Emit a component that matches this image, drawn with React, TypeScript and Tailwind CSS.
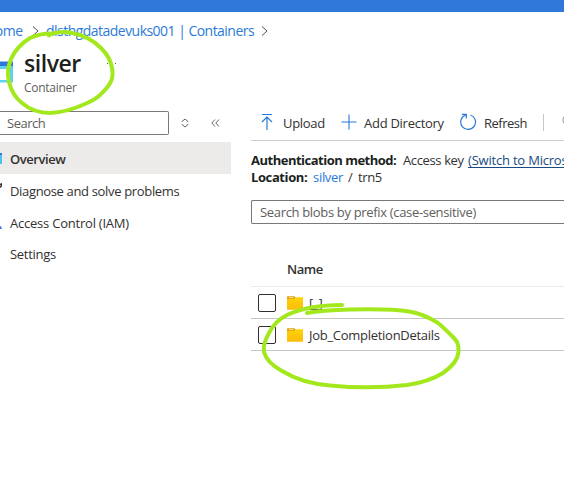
import React from "react";

function Chevron() {
  return (
    <svg width="8" height="12" viewBox="0 0 8 12" fill="none" stroke="#555" strokeWidth="1" className="shrink-0">
      <path d="M1 1.5 6 6 1 10.5" />
    </svg>
  );
}

function Folder() {
  return (
    <svg width="16" height="14" viewBox="0 0 16 14" className="shrink-0">
      <defs>
        <linearGradient id="folder" x1="0" y1="0" x2="0" y2="1">
          <stop offset="0" stopColor="#fdd309" />
          <stop offset="1" stopColor="#fbbc09" />
        </linearGradient>
      </defs>
      <path d="M0 1.2H15.6Q16 1.2 16 1.6V13.4Q16 13.8 15.5 13.8H.5Q0 13.8 0 13.4Z" fill="url(#folder)" />
      <path d="M0 .8Q0 .3.5.3H7.2Q8 .3 8.2 1.2L7 3H0Z" fill="#dfa50e" />
      <path d="M2 1.6H6" stroke="#fbe6ad" strokeWidth=".9" />
    </svg>
  );
}

function Row({ name, tracking }: { name: string; tracking: string }) {
  return (
    <div className="flex h-8 items-center border-b border-[#c8c6c4] pl-[7px]">
      <span className="size-[18px] shrink-0 rounded-[2px] border border-[#323130]" />
      <span className="ml-[11px] flex"><Folder /></span>
      <span className={`ml-1.5 pt-0.5 text-[#323130] ${tracking}`}>{name}</span>
    </div>
  );
}

function Sidebar() {
  return (
    <aside className="w-[231px] shrink-0">
      <div className="flex h-6 items-center">
        <div className="flex h-6 w-[169px] items-center rounded-r-[2px] border border-l-0 border-[#7b7977] pl-[7px] text-[#605e5c]">
          <span className="tracking-[-0.5px]">Search</span>
        </div>
        <svg width="8" height="10" viewBox="0 0 8 10" fill="none" stroke="#666" className="ml-3">
          <path d="M1 4V3.5L4 1 7 3.5V4M1 6V6.5L4 9 7 6.5V6" />
        </svg>
        <svg width="9" height="8" viewBox="0 0 9 8" fill="none" stroke="#555" strokeWidth=".9" className="ml-[22px]">
          <path d="M4 .5.8 4 4 7.5M8 .5 4.8 4 8 7.5" />
        </svg>
      </div>
      <nav className="mt-[7px] text-[#323130]">
        <div className="flex h-8 items-center bg-[#edebe9]">
          <svg width="10" height="16" viewBox="0 0 10 16">
            <path d="M0 3H2V5H0Z" fill="#2f78db" />
            <path d="M0 5H2V14H0Z" fill="#4bc5eb" />
          </svg>
          <span className="pt-0.5 font-semibold tracking-[-0.45px]">Overview</span>
        </div>
        <div className="flex h-8 items-center">
          <svg width="10" height="16" viewBox="0 0 10 16" fill="none" stroke="#323130" strokeWidth="1.4">
            <path d="M0 2.5 1.3 2V4L0 5.5" />
          </svg>
          <span className="pt-0.5 tracking-[-0.34px]">Diagnose and solve problems</span>
        </div>
        <div className="flex h-8 items-center">
          <svg width="10" height="16" viewBox="0 0 10 16">
            <path d="M0 11.5Q1.5 12.5 2 15H0Z" fill="#4673df" />
          </svg>
          <span className="pt-0.5 tracking-[-0.22px]">Access Control (IAM)</span>
        </div>
        <div className="flex h-[30px] items-center pl-2.5">
          <span className="pt-0.5 tracking-[-0.3px]">Settings</span>
        </div>
      </nav>
    </aside>
  );
}

function Toolbar() {
  return (
    <div className="flex h-[30px] border-b border-[#d0cecd] text-[#323130]">
      <div className="flex h-6 w-full items-center whitespace-nowrap">
        <svg width="12" height="18" viewBox="0 0 12 18" fill="none" stroke="#2879d8" strokeWidth="1.2" className="mb-0.5 ml-2.5 shrink-0">
          <path d="M1 1.5H11M6 17V4M1 9 6 4 11 9" />
        </svg>
        <span className="ml-2.5 w-[58px] shrink-0 tracking-[-0.3px]">Upload</span>
        <svg width="16" height="16" viewBox="0 0 16 16" stroke="#2879d8" strokeWidth="1.1" className="mb-0.5 shrink-0">
          <path d="M8 .5V15.5M.5 8H15.5" />
        </svg>
        <span className="ml-[7px] w-24 shrink-0 tracking-[-0.27px]">Add Directory</span>
        <svg width="17" height="18" viewBox="0 0 17 18" fill="none" stroke="#2879d8" strokeWidth="1.2" className="mb-0.5 shrink-0">
          <path d="M10.5 2A7.4 7.4 0 1 1 5 2.3L6.2 1.3M2 1.4H6.3V5.4" />
        </svg>
        <span className="ml-[7px] w-[59px] shrink-0 tracking-[-0.5px]">Refresh</span>
        <span className="mb-0.5 h-[17px] w-px shrink-0 bg-[#c8c6c4]" />
        <svg width="12" height="14" viewBox="0 0 12 14" fill="none" stroke="#a19f9d" strokeWidth="1.1" className="mb-1 ml-[18px] shrink-0">
          <circle cx="6" cy="6" r="5" />
        </svg>
      </div>
    </div>
  );
}

function Scribbles() {
  return (
    <svg className="pointer-events-none absolute inset-0" width="564" height="495" viewBox="0 0 564 495" fill="none" stroke="#a3e81c" strokeWidth="4" strokeLinecap="round" strokeLinejoin="round">
      <path d="M49 35.5C53 32.5 63 31 72 33C84 35 94 41 101 48C106 53 111 61 112 68C114 78 111 84 103 92C98 98 92 101 85 104C74 109 62 112.5 50 113C39 113 29 109 22 103C14 97 11 90 9 82C7 74 8 66 11 59C15 50 22 43 30 38C36 35 42 33.5 52 33.5" />
      <path d="M342 305C322 305 302 308 287 315C277 320 272 327 269 333C265 340 263 346 264 352C266 360 273 366 282 371C295 379 312 384 330 385.5C355 388 386 387.5 407 385C421 383 435 378 443 373C453 366 458 359 458.5 352C459 344 457 341 453 337C448 332 443 327 438 323C430 318 419 313 409 311.5C394 309 370 309 350 309.5C333 310 318 311 307 313" />
    </svg>
  );
}

export default function App() {
  return (
    <div className="relative h-[495px] w-[564px] overflow-hidden bg-white font-['Open_Sans','Noto_Sans',sans-serif] text-[13px] leading-[17px] text-[#323130]">
      <div className="h-3 bg-[#3079da]" />
      <div className="flex h-9 items-center whitespace-nowrap pt-0.5 text-[14px] leading-5 text-[#2c7cd6]">
        <span className="-ml-[15px] w-[47px] shrink-0 tracking-[-0.5px]">Home</span>
        <Chevron />
        <span className="ml-1.5 w-[215px] shrink-0 tracking-[-0.53px]">dlsthgdatadevuks001 | Containers</span>
        <Chevron />
      </div>
      <header className="flex h-[63px]">
        <svg width="24" height="50" viewBox="0 0 24 50" className="shrink-0">
          <path d="M0 13.5H13V18H0Z" fill="#2f78db" />
          <path d="M0 18H13V34.5H0Z" fill="#5cd2f0" />
          <path d="M0 21H7V32H0Z" fill="#fff" />
        </svg>
        <div className="w-[83px]">
          <h1 className="text-[23px] font-semibold leading-[31px] tracking-[-0.45px] text-[#201f1e]">silver</h1>
          <div className="mt-px text-[12px] leading-4 tracking-[-0.28px] text-[#605e5c]">Container</div>
        </div>
        <div className="mt-[15px] flex gap-[3px]">
          <i className="size-px bg-[#555]" />
          <i className="size-px bg-[#555]" />
          <i className="size-px bg-[#555]" />
        </div>
      </header>
      <div className="flex">
        <Sidebar />
        <main className="ml-5 w-[313px] shrink-0">
          <Toolbar />
          <div className="mt-[11px] whitespace-nowrap leading-[17px]">
            <div className="flex">
              <b className="w-[152px] shrink-0 font-bold tracking-[-0.5px] text-[#201f1e]">Authentication method:</b>
              <span className="w-[65px] shrink-0 tracking-[-0.37px]">Access key</span>
              <span className="tracking-[-0.2px] text-[#1b4a83] underline underline-offset-2">(Switch to Microsoft Entra</span>
            </div>
            <div className="flex">
              <b className="w-[62px] shrink-0 font-bold tracking-[-0.4px] text-[#201f1e]">Location:</b>
              <span className="w-[34px] tracking-[-0.3px] text-[#2879d8]">silver</span>
              <span className="w-[11px] pl-px">/</span>
              <span className="tracking-[-0.4px]">trn5</span>
            </div>
          </div>
          <div className="mt-[14px] flex h-6 items-center rounded-l-[2px] border border-r-0 border-[#7b7977] pl-2 text-[#605e5c]">
            <span className="tracking-[-0.33px]">Search blobs by prefix (case-sensitive)</span>
          </div>
          <div className="mt-[30px] flex h-[33px] items-center border-b border-[#edebe9] pb-0.5 pl-9">
            <span className="font-semibold tracking-[-0.5px]">Name</span>
          </div>
          <Row name="[_]" tracking="tracking-[-0.2px]" />
          <Row name="Job_CompletionDetails" tracking="tracking-[-0.28px]" />
        </main>
      </div>
      <Scribbles />
    </div>
  );
}
